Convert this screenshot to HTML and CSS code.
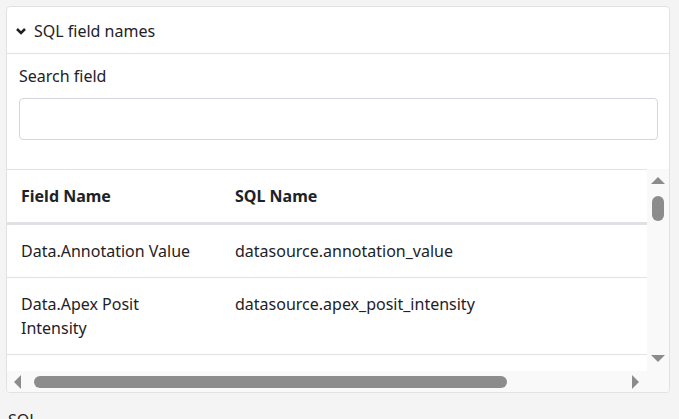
FILE: index.html
```html
<!DOCTYPE html>
<html lang="en">

<head>
  <meta charset="UTF-8" />
  <meta name="viewport" content="width=device-width, initial-scale=1" />
  <title>SQL field names</title>
  <link rel="stylesheet" href="styles.css">
</head>

<body>

  <section class="panel">
    <header class="panel-head">
      <svg class="chevron" width="10" height="10" viewBox="0 0 10 10" aria-hidden="true">
        <path d="M1 3 L5 7 L9 3" />
      </svg>
      <span>SQL field names</span>
    </header>

    <div class="panel-body">
      <label class="field-label" for="searchField">Search field</label>
      <input class="search" id="searchField" type="text" />
    </div>

    <!-- field list with its scrollbars -->
    <div class="table-wrap">
      <div class="table-view">
        <table class="fields">
          <colgroup>
            <col class="col-field" />
            <col />
          </colgroup>
          <thead>
            <tr>
              <th>Field Name</th>
              <th>SQL Name</th>
            </tr>
          </thead>
          <tbody>
            <tr><td>Data.Annotation Value</td><td>datasource.annotation_value</td></tr>
            <tr><td>Data.Apex Posit Intensity</td><td>datasource.apex_posit_intensity</td></tr>
          </tbody>
        </table>
      </div>

      <div class="vbar">
        <span class="arrow arrow-up"></span>
        <span class="thumb thumb-v"></span>
        <span class="arrow arrow-down"></span>
      </div>

      <div class="hbar">
        <span class="arrow arrow-left"></span>
        <span class="thumb thumb-h"></span>
        <span class="arrow arrow-right"></span>
      </div>

      <div class="corner"></div>
    </div>
  </section>

  <p class="section-label">SQL</p>

</body>

</html>
```

FILE: styles.css
```css
body {
  background-color: #f4f4f4;
  color: #1e2226;
  font-family: 'Noto Sans', 'Open Sans', sans-serif;
  font-size: 16px;
  line-height: 24px;
  margin: 0;
  padding: 6px 9px 0 6px;
}

.panel {
  background: #fff;
  border: 1px solid #e2e2e2;
  border-radius: 4px;
  overflow: hidden;
}

.panel-head {
  display: flex;
  align-items: center;
  gap: 8px;
  padding: 12px 9px 10px 9px;
  border-bottom: 1px solid #e2e2e2;
}

.chevron {
  fill: none;
  stroke: #1e2226;
  stroke-width: 2.5;
}

.panel-body {
  padding: 10px 11px 29px 12px;
}

.field-label {
  display: block;
  margin-bottom: 10px;
}

.search {
  display: block;
  width: 100%;
  height: 42px;
  margin: 0;
  padding: 6px 12px;
  border: 1px solid #d3d7db;
  border-radius: 4px;
  box-sizing: border-box;
  font: inherit;
  background: #fff;
}

.table-wrap {
  display: grid;
  grid-template-columns: 640px 22px;
  grid-template-rows: 202px 21px;
}

.table-view {
  overflow: hidden;
}

.fields {
  width: 792px;
  table-layout: fixed;
  border-collapse: collapse;
}

.col-field {
  width: 214px;
}

.fields th,
.fields td {
  text-align: left;
  vertical-align: top;
  padding: 14px;
  border-bottom: 1px solid #e2e2e2;
}

.fields th {
  font-weight: 700;
  border-top: 1px solid #e2e2e2;
  border-bottom: 3px solid #dee2e6;
}

/* scrollbars */
.vbar,
.hbar,
.corner {
  background: #f9f9f9;
}

.vbar {
  display: flex;
  flex-direction: column;
  align-items: center;
}

.hbar {
  display: flex;
  align-items: center;
}

.thumb {
  background: #8c8c8c;
  border-radius: 6px;
}

.thumb-v {
  width: 12px;
  height: 25px;
  margin-top: 12px;
}

.thumb-h {
  width: 473px;
  height: 12px;
  margin-left: 13px;
  margin-top: 1px;
}

.arrow {
  width: 0;
  height: 0;
  border: 7px solid transparent;
}

.arrow-up {
  border-top: 0;
  border-bottom-color: #8c8c8c;
  margin-top: 8px;
}

.arrow-down {
  border-bottom: 0;
  border-top-color: #8c8c8c;
  margin-top: auto;
  margin-bottom: 9px;
}

.arrow-left {
  border-left: 0;
  border-right-color: #8c8c8c;
  margin-left: 7px;
}

.arrow-right {
  border-right: 0;
  border-left-color: #8c8c8c;
  margin-left: auto;
  margin-right: 8px;
}

.section-label {
  margin: 15px 0 0 2px;
}
```
